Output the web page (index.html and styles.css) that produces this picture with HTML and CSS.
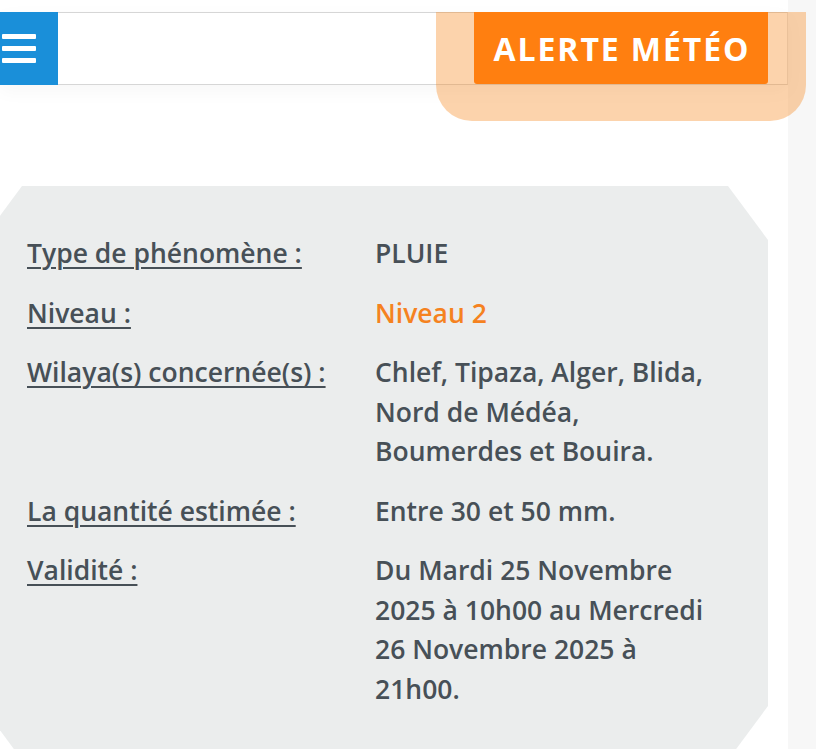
FILE: index.html
```html
<!DOCTYPE html>
<html lang="fr">
<head>
<meta charset="utf-8">
<title>Alerte météo</title>
<link rel="stylesheet" href="styles.css">
</head>
<body>
<div class="page">
  <header class="topbar">
    <button class="menu-btn" aria-label="Menu">
      <span class="bar"></span><span class="bar"></span><span class="bar"></span>
    </button>
  </header>
  <div class="alert-tab">
    <a class="alert-btn" href="#">ALERTE MÉTÉO</a>
  </div>
  <main class="main">
    <section class="card">
      <dl class="info">
        <dt>Type de phénomène :</dt>
        <dd>PLUIE</dd>
        <dt>Niveau :</dt>
        <dd class="level">Niveau 2</dd>
        <dt>Wilaya(s) concernée(s) :</dt>
        <dd>Chlef, Tipaza, Alger, Blida, Nord de Médéa, Boumerdes et Bouira.</dd>
        <dt>La quantité estimée :</dt>
        <dd>Entre 30 et 50 mm.</dd>
        <dt>Validité :</dt>
        <dd>Du Mardi 25 Novembre 2025 à 10h00 au Mercredi 26 Novembre 2025 à 21h00.</dd>
      </dl>
    </section>
  </main>
</div>
</body>
</html>
```
FILE: styles.css
```css
html, body {
  margin: 0;
  padding: 0;
}
body {
  background: #f7f7f7;
  font-family: "Open Sans", "Lato", sans-serif;
  overflow: hidden;
  height: 749px;
}
.page {
  position: relative;
  width: 788px;
  height: 749px;
  background: #ffffff;
  padding-top: 12px;
  box-sizing: border-box;
  overflow: visible;
}
.topbar {
  height: 73px;
  box-sizing: border-box;
  border-top: 1px solid #d6d6d6;
  border-bottom: 1px solid #d6d6d6;
  border-right: 1px solid #e2e2e2;
  background: #ffffff;
  display: flex;
  align-items: stretch;
  box-shadow: 0 6px 18px rgba(0, 0, 0, 0.035);
}
.menu-btn {
  width: 58px;
  margin: -1px 0 -1px 0;
  border: none;
  padding: 0 0 0 2px;
  background: #1a8fd9;
  display: flex;
  flex-direction: column;
  justify-content: center;
  gap: 7.5px;
}
.bar {
  display: block;
  width: 34px;
  height: 4.5px;
  border-radius: 1px;
  background: #ffffff;
}
.alert-tab {
  position: absolute;
  left: 436px;
  top: 12px;
  width: 370px;
  height: 109px;
  border-radius: 0 0 36px 36px;
  background: rgba(247, 140, 36, 0.38);
  display: flex;
  justify-content: flex-start;
  padding-left: 38px;
  box-sizing: border-box;
}
.alert-btn {
  width: 294px;
  height: 72px;
  background: #ff7f10;
  border-radius: 0 0 3px 3px;
  color: #ffffff;
  text-decoration: none;
  font-family: "Open Sans", sans-serif;
  font-weight: 700;
  font-size: 32px;
  display: flex;
  align-items: center;
  justify-content: center;
  letter-spacing: 1.9px;
  padding-left: 2px;
  box-sizing: border-box;
}
.main {
  padding-top: 101px;
}
.card {
  margin-left: -18px;
  width: 786px;
  height: 574px;
  background: #ebeded;
  clip-path: polygon(40px 0, 746px 0, 786px 54px, 786px 520px, 746px 574px, 40px 574px, 0 520px, 0 54px);
  padding: 48px 0 0 45px;
  box-sizing: border-box;
}
.info {
  margin: 0;
  display: grid;
  grid-template-columns: 348px 342px;
  row-gap: 20px;
  color: #475057;
  font-size: 26.5px;
  font-weight: 600;
  line-height: 39.5px;
}
.info dt {
  text-decoration: underline;
  text-decoration-thickness: 2px;
  text-underline-offset: 4px;
}
.info dd {
  margin: 0;
}
.info .level {
  color: #f5821f;
}
```
